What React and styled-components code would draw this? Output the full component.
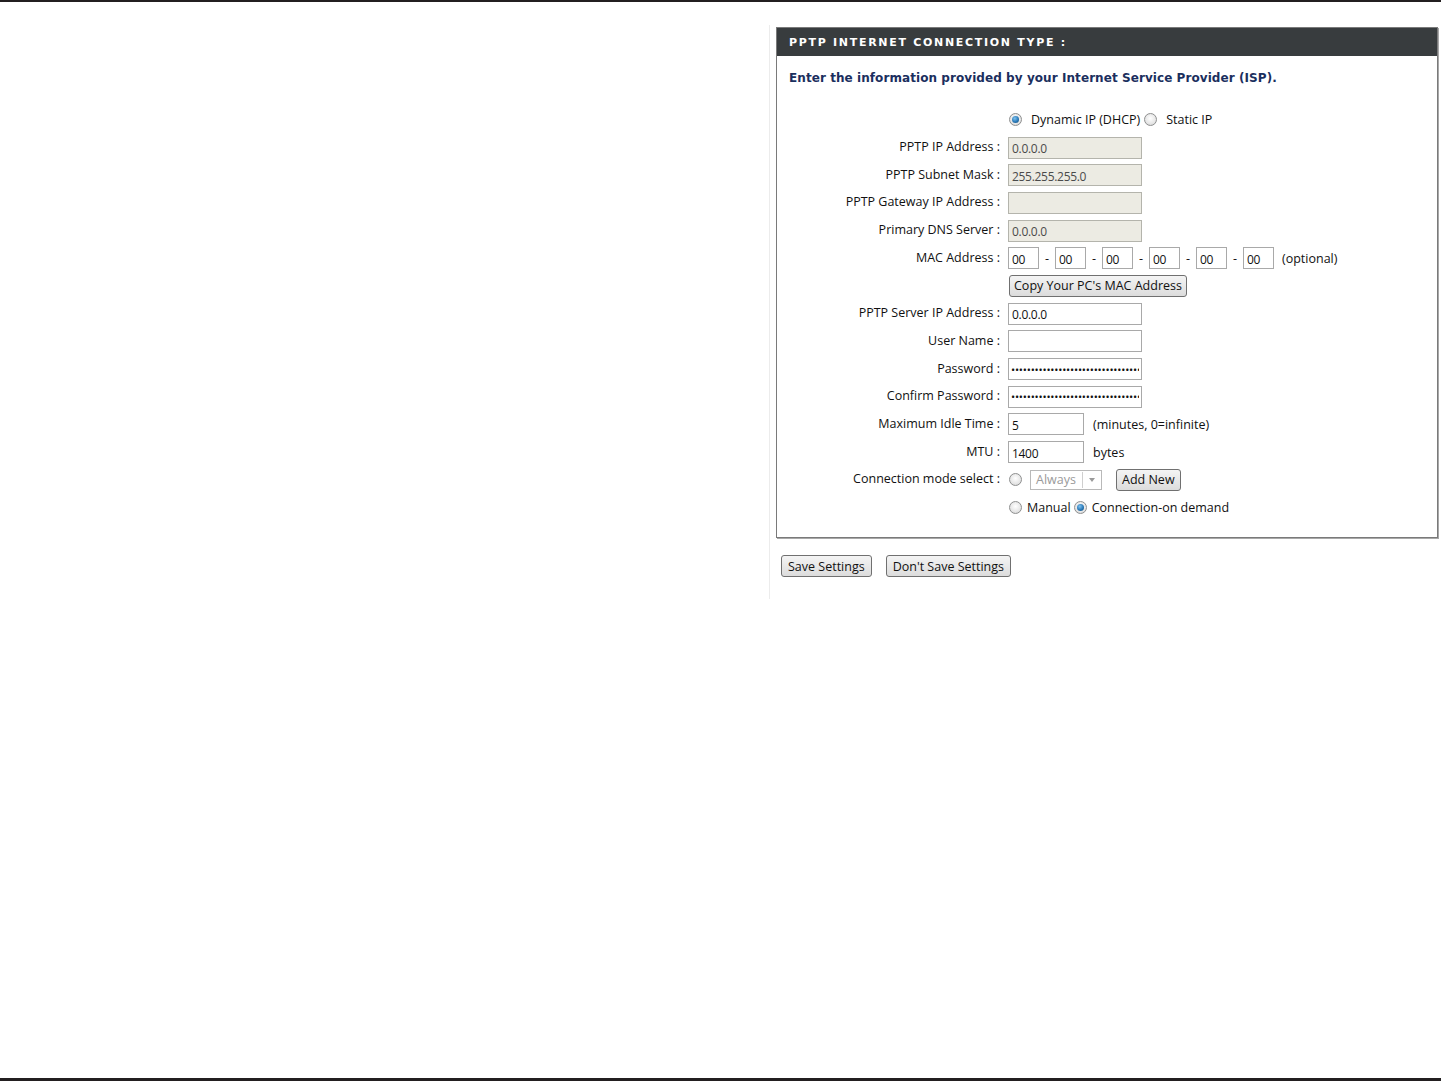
import React from 'react';
import styled, { createGlobalStyle } from 'styled-components';

const GlobalStyle = createGlobalStyle`
  html, body {
    margin: 0;
    padding: 0;
    background: #ffffff;
  }
  body {
    font-family: "Open Sans", "Noto Sans", "Liberation Sans", sans-serif;
    font-size: 12.5px;
    color: #111;
  }
`;

const Page = styled.div`
  width: 1441px;
  height: 1081px;
  box-sizing: border-box;
  border-top: 2px solid #231f20;
  border-bottom: 3px solid #231f20;
  display: flex;
  flex-direction: column;
`;

const Body = styled.div`
  display: flex;
  padding-top: 20px;
`;

const Spacer = styled.div`
  width: 769px;
  flex-shrink: 0;
`;

const Divider = styled.div`
  width: 1px;
  height: 574px;
  background: #ececec;
  margin-top: 3px;
  flex-shrink: 0;
`;

const Column = styled.div`
  margin-left: 6px;
  width: 662px;
  padding-top: 5px;
`;

const Panel = styled.div`
  border: 1px solid #7a7a7a;
  box-shadow: 1px 1px 0 #a8a8a8;
  background: #fff;
  height: 511px;
  box-sizing: border-box;
`;

const Header = styled.div`
  height: 28px;
  background: #383c3e;
  color: #ffffff;
  font-family: "DejaVu Sans", Verdana, sans-serif;
  font-weight: bold;
  font-size: 11px;
  letter-spacing: 1.7px;
  display: flex;
  align-items: center;
  padding-left: 12px;
`;

const Intro = styled.div`
  font-family: "DejaVu Sans", Verdana, sans-serif;
  font-weight: bold;
  font-size: 12px;
  letter-spacing: 0.07px;
  color: #1b2f5e;
  padding: 15px 0 0 12px;
  height: 22px;
`;

const Form = styled.div`
  display: grid;
  grid-template-columns: 223px 1fr;
  grid-auto-rows: 27.7px;
  column-gap: 8px;
  margin-top: 13px;
`;

const Label = styled.div`
  text-align: right;
  display: flex;
  align-items: center;
  justify-content: flex-end;
  white-space: nowrap;
  padding-bottom: 2px;
`;

const Field = styled.div`
  display: flex;
  align-items: center;
  white-space: nowrap;
`;

const TextBox = styled.input`
  box-sizing: border-box;
  width: ${p => p.w || 134}px;
  height: 22px;
  border: 1px solid ${p => (p.disabled ? '#b4b4ac' : '#a9a9a9')};
  background: ${p => (p.disabled ? '#ecebe3' : '#ffffff')};
  font-family: "Open Sans", "Noto Sans", sans-serif;
  font-size: 12px;
  letter-spacing: -0.3px;
  color: ${p => (p.disabled ? '#4a4a4a' : '#111')};
  padding: 2px 3px 0;
  margin: 0;
  outline: none;
`;

const Dots = styled(TextBox)`
  font-size: 11px;
  letter-spacing: -0.2px;
  padding: 0 2px;
`;

const Sep = styled.span`
  width: 16px;
  text-align: center;
`;

const Note = styled.span`
  margin-left: ${p => p.ml || 0}px;
`;

const Radio = styled.span`
  display: inline-block;
  box-sizing: border-box;
  width: 13px;
  height: 13px;
  border-radius: 50%;
  border: 1px solid #8e8f8f;
  background: radial-gradient(circle at 50% 40%, #ffffff 0%, #e6e6e6 60%, #cfcfcf 100%);
  position: relative;
  margin: 0 ${p => p.mr || 6}px 0 ${p => p.ml || 1}px;
  flex-shrink: 0;
  &::after {
    content: '';
    display: ${p => (p.checked ? 'block' : 'none')};
    position: absolute;
    left: 2px;
    top: 2px;
    width: 7px;
    height: 7px;
    border-radius: 50%;
    background: radial-gradient(circle at 40% 35%, #7fc3ef 0%, #2a79b8 55%, #15496f 100%);
  }
`;

const Button = styled.button`
  height: 22px;
  box-sizing: border-box;
  border: 1px solid #707070;
  border-radius: 3px;
  background: linear-gradient(#f4f4f4, #dcdcdc);
  font-family: "Open Sans", "Noto Sans", sans-serif;
  font-size: 12.5px;
  color: #111;
  padding: 0 ${p => p.px || 5}px;
  margin: 0 0 0 ${p => p.ml || 0}px;
  cursor: pointer;
`;

const Select = styled.div`
  display: flex;
  align-items: center;
  box-sizing: border-box;
  width: 72px;
  height: 20px;
  border: 1px solid #b9b9b9;
  color: #9a9a9a;
  margin-left: 4px;
  padding-left: 5px;
  justify-content: space-between;
`;

const Arrow = styled.span`
  width: 17px;
  height: 16px;
  border-left: 1px solid #cfcfcf;
  margin-right: 1px;
  display: flex;
  align-items: center;
  justify-content: center;
  &::after {
    content: '';
    border-left: 3px solid transparent;
    border-right: 3px solid transparent;
    border-top: 4px solid #9a9a9a;
  }
`;

const Actions = styled.div`
  display: flex;
  gap: 14px;
  margin-top: 17px;
  padding-left: 5px;
`;

const macParts = ['00', '00', '00', '00', '00', '00'];

export default function App() {
  return (
    <Page>
      <GlobalStyle />
      <Body>
        <Spacer />
        <Divider />
        <Column>
          <Panel>
            <Header>PPTP INTERNET CONNECTION TYPE :</Header>
            <Intro>Enter the information provided by your Internet Service Provider (ISP).</Intro>
            <Form>
              <Label />
              <Field>
                <Radio checked mr={9} />
                <span>Dynamic IP (DHCP)</span>
                <Radio ml={4} mr={9} />
                <span>Static IP</span>
              </Field>

              <Label>PPTP IP Address :</Label>
              <Field><TextBox disabled readOnly value="0.0.0.0" /></Field>

              <Label>PPTP Subnet Mask :</Label>
              <Field><TextBox disabled readOnly value="255.255.255.0" /></Field>

              <Label>PPTP Gateway IP Address :</Label>
              <Field><TextBox disabled readOnly value="" /></Field>

              <Label>Primary DNS Server :</Label>
              <Field><TextBox disabled readOnly value="0.0.0.0" /></Field>

              <Label>MAC Address :</Label>
              <Field>
                {macParts.map((v, i) => (
                  <React.Fragment key={i}>
                    {i > 0 && <Sep>-</Sep>}
                    <TextBox w={31} readOnly value={v} />
                  </React.Fragment>
                ))}
                <Note ml={8}>(optional)</Note>
              </Field>

              <Label />
              <Field><Button ml={1} px={4}>Copy Your PC's MAC Address</Button></Field>

              <Label>PPTP Server IP Address :</Label>
              <Field><TextBox readOnly value="0.0.0.0" /></Field>

              <Label>User Name :</Label>
              <Field><TextBox readOnly value="" /></Field>

              <Label>Password :</Label>
              <Field><Dots readOnly value={'\u2022'.repeat(33)} /></Field>

              <Label>Confirm Password :</Label>
              <Field><Dots readOnly value={'\u2022'.repeat(33)} /></Field>

              <Label>Maximum Idle Time :</Label>
              <Field>
                <TextBox w={76} readOnly value="5" />
                <Note ml={9}>(minutes, 0=infinite)</Note>
              </Field>

              <Label>MTU :</Label>
              <Field>
                <TextBox w={76} readOnly value="1400" />
                <Note ml={9}>bytes</Note>
              </Field>

              <Label>Connection mode select :</Label>
              <Field>
                <Radio mr={4} />
                <Select>
                  <span>Always</span>
                  <Arrow />
                </Select>
                <Button ml={14}>Add New</Button>
              </Field>

              <Label />
              <Field>
                <Radio mr={5} />
                <span>Manual</span>
                <Radio checked ml={3} mr={5} />
                <span>Connection-on demand</span>
              </Field>
            </Form>
          </Panel>
          <Actions>
            <Button px={6}>Save Settings</Button>
            <Button px={6}>Don't Save Settings</Button>
          </Actions>
        </Column>
      </Body>
    </Page>
  );
}
